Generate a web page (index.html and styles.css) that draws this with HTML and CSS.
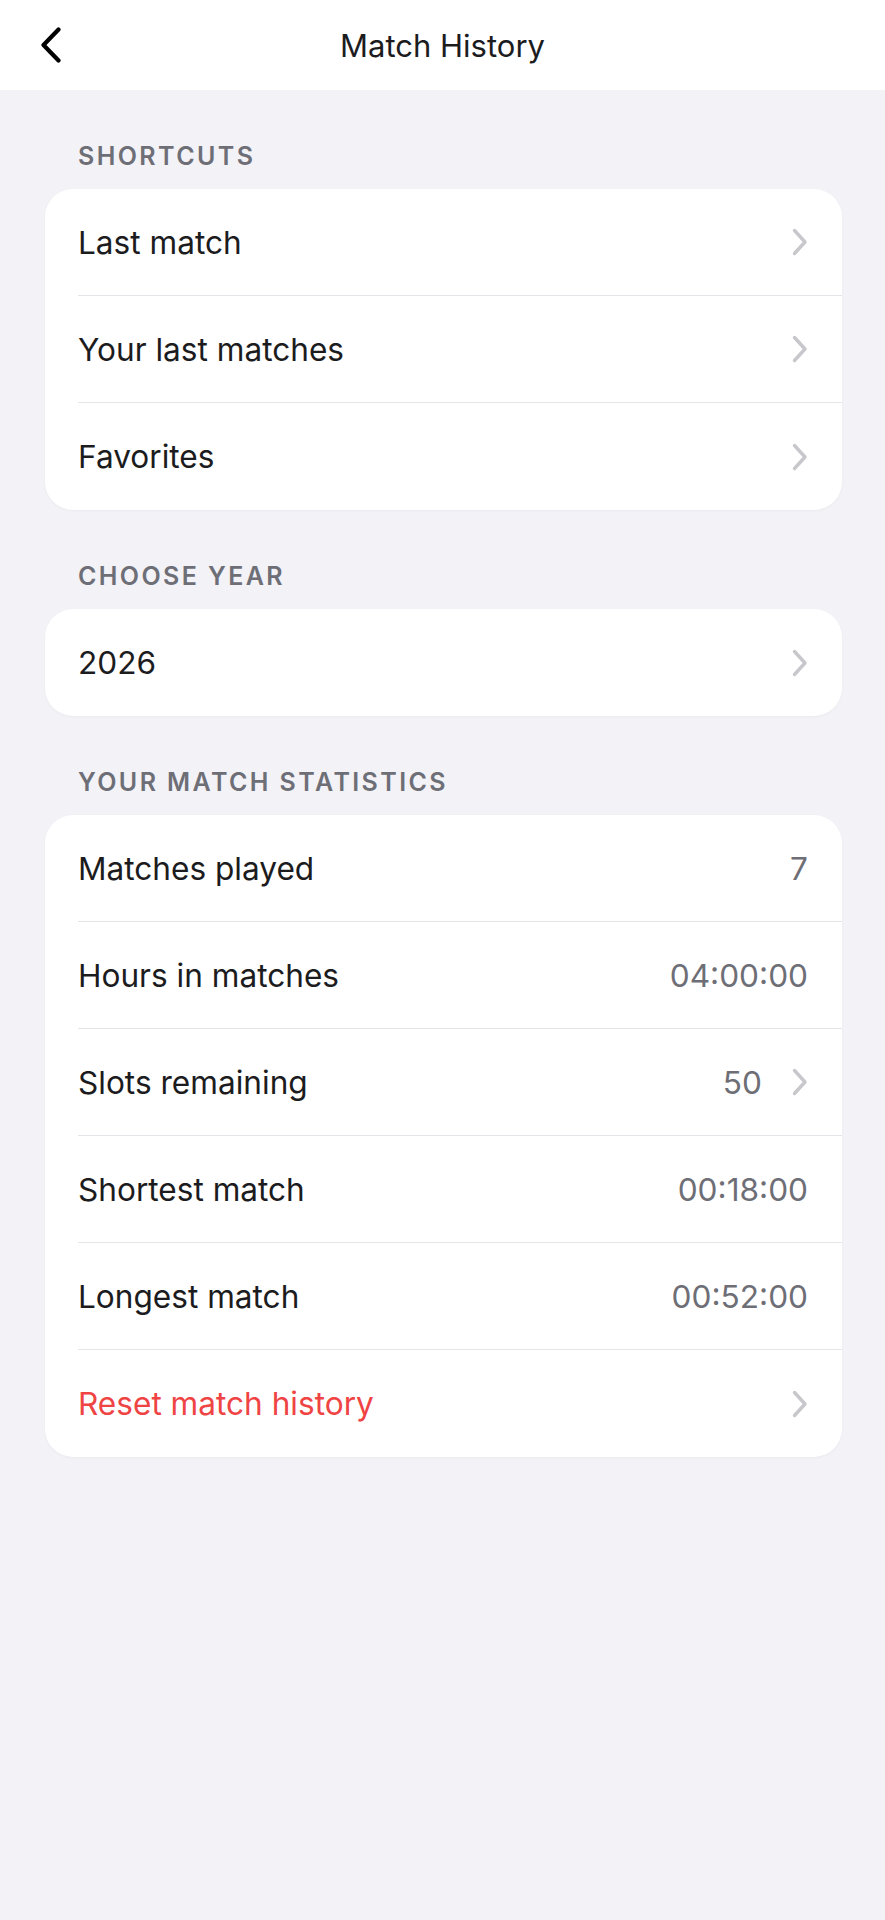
FILE: index.html
```html
<!DOCTYPE html>
<html lang="en">
<head>
  <meta charset="UTF-8">
  <meta name="viewport" content="width=device-width, initial-scale=1.0">
  <title>Match History</title>
  <link rel="stylesheet" href="styles.css">
</head>
<body>
  <header class="topbar">
    <button class="back" aria-label="Back">
      <svg width="22" height="36" viewBox="0 0 22 36"><path d="M18.5 2.5 L3.5 18 L18.5 33.5" fill="none" stroke="#000" stroke-width="4.2" stroke-linecap="round" stroke-linejoin="round"/></svg>
    </button>
    <h1>Match History</h1>
  </header>
  <main>
    <h2 class="label">Shortcuts</h2>
    <ul class="card">
      <li class="row"><span>Last match</span><i class="chev"></i></li>
      <li class="row"><span>Your last matches</span><i class="chev"></i></li>
      <li class="row"><span>Favorites</span><i class="chev"></i></li>
    </ul>

    <h2 class="label">Choose year</h2>
    <ul class="card">
      <li class="row"><span>2026</span><i class="chev"></i></li>
    </ul>

    <h2 class="label">Your match statistics</h2>
    <ul class="card">
      <li class="row"><span>Matches played</span><span class="value">7</span></li>
      <li class="row"><span>Hours in matches</span><span class="value">04:00:00</span></li>
      <li class="row"><span>Slots remaining</span><span class="value">50</span><i class="chev"></i></li>
      <li class="row"><span>Shortest match</span><span class="value">00:18:00</span></li>
      <li class="row"><span>Longest match</span><span class="value">00:52:00</span></li>
      <li class="row danger"><span>Reset match history</span><i class="chev"></i></li>
    </ul>
  </main>
  <script>
    // same chevron svg in every row
    const chev = '<svg width="16" height="28" viewBox="0 0 16 28"><path d="M2.5 2.5 L13 14 L2.5 25.5" fill="none" stroke="#c7c7cc" stroke-width="3.4" stroke-linecap="round" stroke-linejoin="round"/></svg>';
    document.querySelectorAll('.chev').forEach(el => el.innerHTML = chev);
  </script>
</body>
</html>
```

FILE: styles.css
```css
body {
  margin: 0;
  background: #f2f2f7;
  font-family: Inter, "Noto Sans", sans-serif;
  color: #1c1c1e;
}
.topbar {
  height: 90px;
  background: #fff;
  display: flex;
  align-items: center;
  justify-content: center;
  position: relative;
}
.topbar h1 {
  margin: 0;
  font-size: 31px;
  font-weight: 400;
}
.back {
  position: absolute;
  left: 40px;
  top: 27px;
  padding: 0;
  border: none;
  background: none;
  display: flex;
}
main {
  padding: 0 43px 40px 45px;
}
.label {
  margin: 50px 0 17px 33px;
  line-height: 32px;
  font-size: 25px;
  font-weight: 600;
  letter-spacing: 2.4px;
  text-transform: uppercase;
  color: #6e6e76;
}
.card {
  list-style: none;
  margin: 0;
  padding: 0 0 0 33px;
  background: #fff;
  border-radius: 28px;
  box-shadow: 0 1px 3px rgba(0, 0, 0, 0.04);
}
.row {
  box-sizing: border-box;
  height: 107px;
  display: flex;
  align-items: center;
  padding-right: 34px;
  font-size: 31.6px;
  border-bottom: 1px solid #e3e3e8;
}
.row:last-child {
  border-bottom: none;
}
.row span:first-child {
  flex: 1;
}
.value {
  color: #6e6e76;
}
.chev {
  display: flex;
}
.value + .chev {
  margin-left: 30px;
}
.danger {
  color: #ef4444;
}
```
